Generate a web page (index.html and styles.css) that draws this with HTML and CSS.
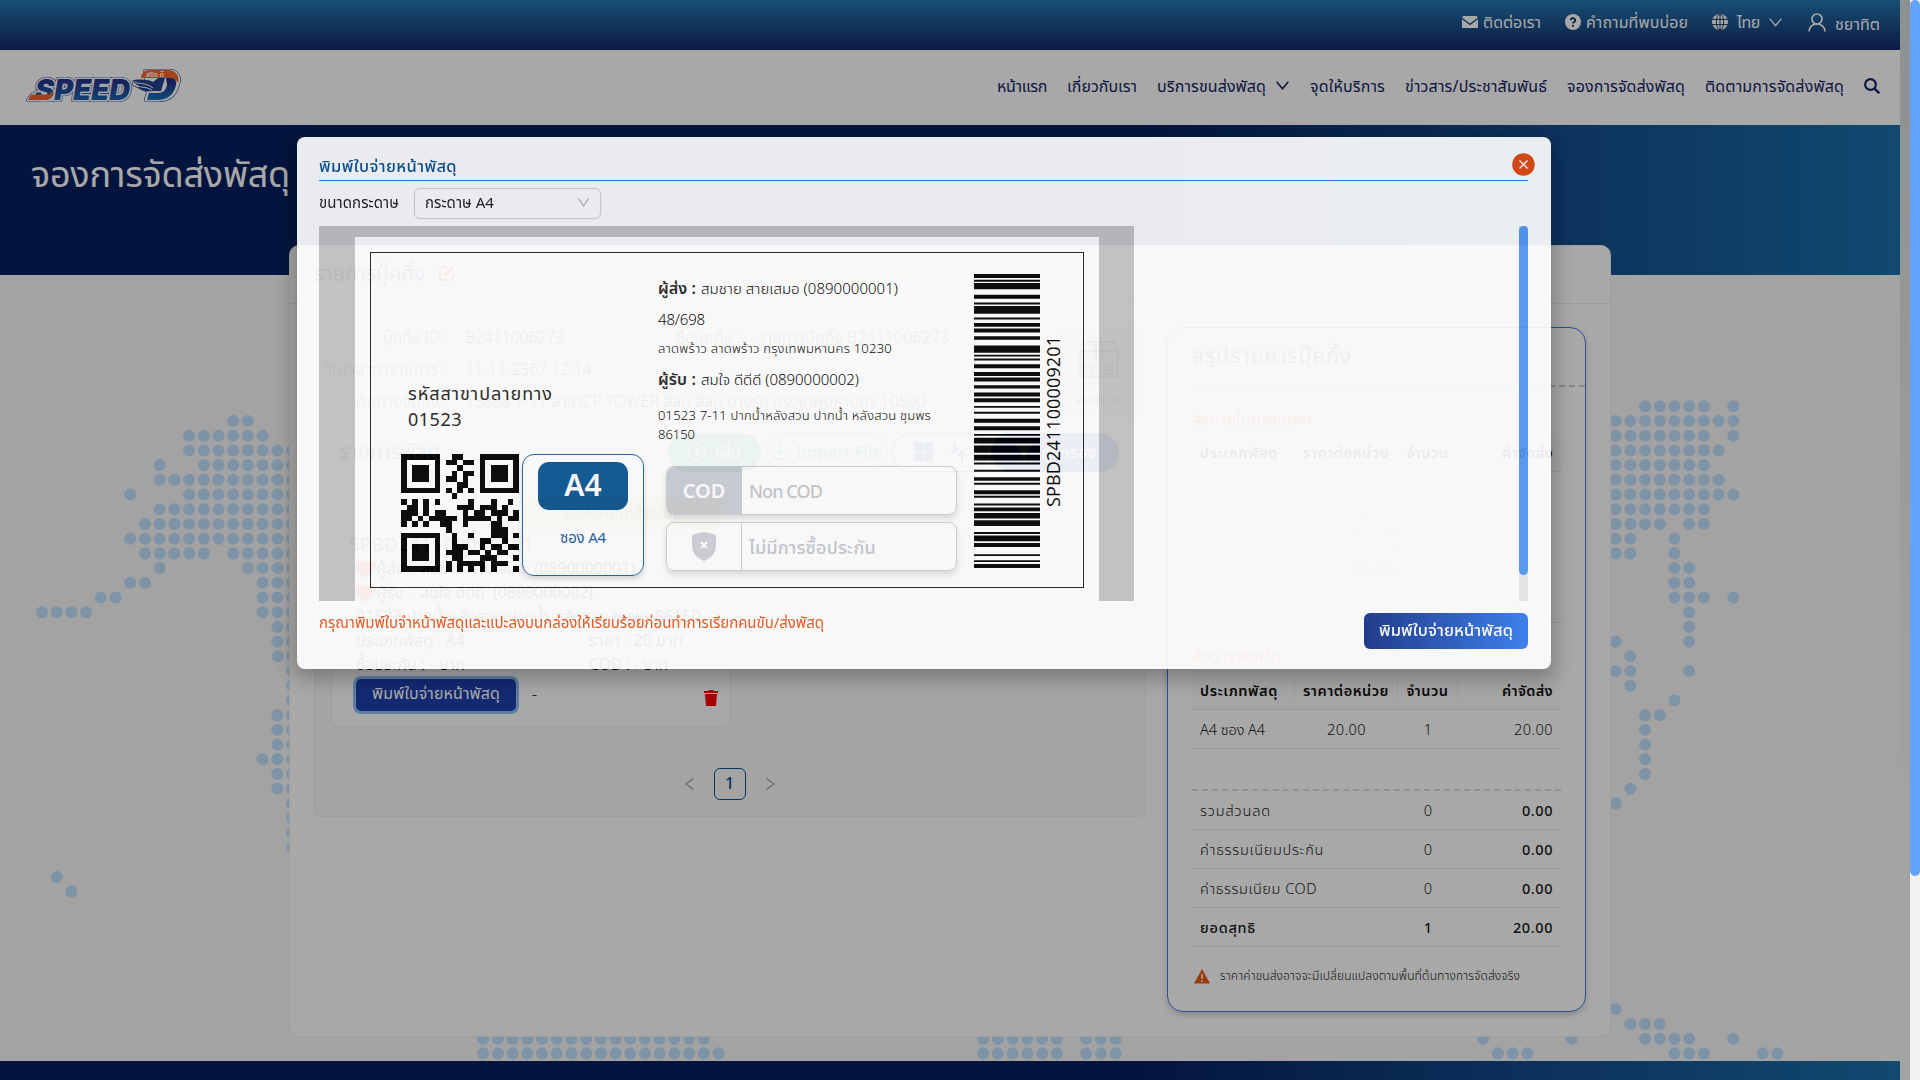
FILE: index.html
```html
<!DOCTYPE html>
<html lang="th">
<head>
<meta charset="utf-8">
<title>Speed-D</title>
<link rel="stylesheet" href="styles.css">
</head>
<body>
<div class="viewport">
<div class="page">
  <div class="topbar">
    <a class="tb contact"><svg width="16" height="12" viewBox="0 0 16 12"><path d="M1.5 0h13L16 1.500 8 7.500 0 1.500zM0 3.200l8 6 8-6V12H0z" fill="currentColor"/></svg><span data-w="58">ติดต่อเรา</span></a>
    <a class="tb faq"><svg width="16" height="16" viewBox="0 0 16 16"><circle cx="8" cy="8" r="8" fill="currentColor"/><path d="M5.800 6.300a2.200 2 0 1 1 3.200 1.700c-.8.400-1 .7-1 1.500" fill="none" stroke="#15345f" stroke-width="1.800"/><circle cx="8" cy="11.800" r="1.100" fill="#15345f"/></svg><span data-w="102">คำถามที่พบบ่อย</span></a>
    <a class="tb lang"><svg width="16" height="16" viewBox="0 0 16 16"><circle cx="8" cy="8" r="8" fill="currentColor"/><path d="M0 5.400h16M0 10.600h16M8 0v16" stroke="#15345f"/><ellipse cx="8" cy="8" rx="3.700" ry="8" fill="none" stroke="#15345f"/></svg><span data-w="23">ไทย</span><svg width="13" height="9" viewBox="0 0 13 9"><path d="M.7.7l5.800 7 5.800-7" fill="none" stroke="currentColor" stroke-width="1.300"/></svg></a>
    <a class="tb user"><svg width="18" height="19" viewBox="0 0 18 19"><circle cx="9" cy="6" r="5" fill="none" stroke="currentColor" stroke-width="1.700"/><path d="M1 18.500c0-4.500 3.500-7.500 8-7.500s8 3 8 7.500" fill="none" stroke="currentColor" stroke-width="1.700"/></svg><span data-w="45">ชยาทิต</span></a>
  </div>
  <div class="navbar">
    <svg class="logo" width="164" height="42" viewBox="0 0 164 42">
      <defs><linearGradient id="lg" x1="0" y1="0" x2="0" y2="1"><stop offset=".15" stop-color="#2a2a86"/><stop offset="1" stop-color="#1576b8"/></linearGradient></defs>
      <g stroke="#3a4a9a" stroke-width="4.200" stroke-linejoin="round" fill="#3a4a9a"><text class="logotxt" x="13" y="35" textLength="95" lengthAdjust="spacingAndGlyphs">SPEED</text><path d="M6 35h24l4-6H11zM123 6h24c9 0 12 7 8 16-3 9-10 13-19 13h-12l3-9-15-7 13-1z"/></g>
      <g stroke="#fff" stroke-width="3" stroke-linejoin="round" fill="#fff"><text class="logotxt" x="13" y="35" textLength="95" lengthAdjust="spacingAndGlyphs">SPEED</text><path d="M6 35h24l4-6H11zM123 6h24c9 0 12 7 8 16-3 9-10 13-19 13h-12l3-9-15-7 13-1z"/></g>
      <text class="logotxt" x="13" y="35" textLength="95" lengthAdjust="spacingAndGlyphs" fill="url(#lg)">SPEED</text>
      <path d="M9 29.500h18l3-4 1 3q-1 6.500-7 6.500H6z" fill="#f2662b"/>
      <path d="M119 13q1-8 8-8h18c9 0 13 6 11 13-2-4-6-5-12-5z" fill="#f2662b"/>
      <path d="M144 13h4c5 0 7 3 6 7-2 10-9 15-18 15h-11l2-7h9c5 0 8-3 9-8z" fill="url(#lg)"/>
      <path d="M109 16c6-2 16-2 22 1l5-4h7l-4 13h-8c-7 1-13-1-15-4h4c-4-1-7-3-8-5h4z" fill="#27408f"/>
      <path d="M113 18q12 0 18 5M119 22q6 0 11 3" stroke="#fff" fill="none"/>
      <text x="124" y="11.500" font-size="6.500" font-weight="700" fill="#fff">สปีด ดี</text>
    </svg>
    <nav>
      <a data-w="50">หน้าแรก</a><a data-w="70">เกี่ยวกับเรา</a><a class="drop"><span data-w="109">บริการขนส่งพัสดุ</span><svg width="13" height="9" viewBox="0 0 13 9"><path d="M.7.7l5.800 7 5.800-7" fill="none" stroke="currentColor" stroke-width="1.500"/></svg></a><a data-w="75">จุดให้บริการ</a><a data-w="142">ข่าวสาร/ประชาสัมพันธ์</a><a data-w="118">จองการจัดส่งพัสดุ</a><a data-w="139">ติดตามการจัดส่งพัสดุ</a>
      <svg width="16" height="16" viewBox="0 0 16 16"><circle cx="6.500" cy="6.500" r="5.400" fill="none" stroke="currentColor" stroke-width="2.100"/><path d="M10.500 10.500l4.800 4.800" stroke="currentColor" stroke-width="2.400"/></svg>
    </nav>
  </div>
  <div class="banner"><h1 data-w="259">จองการจัดส่งพัสดุ</h1></div>
  <main>
    <svg class="map" width="1900" height="786" viewBox="0 0 1900 786"><path transform="translate(42 146) scale(14.707)" fill="none" stroke="#c0dffb" stroke-width=".82" stroke-linecap="round" stroke-dasharray="0 1" d="M13 0h1.100M10 1h5.100M10 2h7.100M8 3h.1M11 3h6.100M8 4h9.100M6 5h.1M10 5h7.100M8 6h9.100M7 7h10.100M6 8h11.100M7 9h4.100M13 9h4.100M8 10h.1M14 10h3.100M6 11h1.100M15 11h2.100M4 12h1.100M15 12h2.100M0 13h3.100M15 13h2.100M16 14h1.100M16 15h1.100M16 16h1.100M17 17h.1M17 18h.1M17 19h.1M16 20h1.100M16 21h1.100M16 22h1.100M15 23h2.100M16 24h1.100M16 25h1.100M17 26h.1M17 27h.1M17 28h.1M17 29h.1M1 31h.1M2 32h.1M109 -1h4.100M115 -1h.1M107 0h8.100M107 1h6.100M115 1h.1M107 2h7.100M107 3h6.100M107 4h7.100M107 5h8.100M107 6h6.100M107 7h3.100M112 7h1.100M107 8h1.100M111 8h.1M107 9h1.100M111 9h.1M111 10h1.100M111 11h1.100M111 12h2.100M115 12h.1M112 13h.1M112 14h.1M107 15h.1M112 15h.1M108 16h.1M107 17h1.100M112 17h.1M108 18h.1M111 19h.1M109 20h1.100M109 21h.1M109 22h.1M109 23h.1M109 24h.1M108 25h.1M107 26h.1M107 40h.1M108 41h2.100M109 42h3.100M115 42h.1M111 43h2.100M117 43h1.100M30 42h15.100M30 43h16.100M64 42h5.100M64 43h5.100M71 42h2.100M71 43h2.100M98 42h.1M104 42h.1M99 43h2.100"/></svg>
    <section class="card">
      <header><h2 data-w="111">รายการบุ๊คกิ้ง</h2><i class="edit"><svg width="16" height="16" viewBox="0 0 16 16"><path d="M8 2H3a2 2 0 0 0-2 2v9a2 2 0 0 0 2 2h9a2 2 0 0 0 2-2V9" fill="none" stroke="#ff4500" stroke-width="2"/><path d="M5 8.500L12.500 1l2.500 2.500L7.500 11 5 11.300z" fill="#ff4500"/></svg></i></header>
      <div class="cols">
        <div class="left">
          <div class="info">
            <div class="fields">
              <div><label data-w="65">บุ๊คกิ้ง ID :</label><span class="v1" data-w="99">B2411006273</span><label class="l2" data-w="65">ชื่อบุ๊คกิ้ง :</label><span data-w="191">รายการบึกกิ๊ง B2411006273</span></div>
              <div><label data-w="124">วันเวลาทำรายการ :</label><span data-w="126">11-11-2567 12:14</span></div>
              <div><label data-w="92">ต้นทางจัดส่ง :</label><span data-w="461">15888 7-11 สาขาCP TOWER สีลม สีลม บางรัก กรุงเทพมหานคร 10500</span></div>
            </div>
            <div class="kind"><svg width="40" height="37" viewBox="0 0 40 37"><path d="M4 1h32l3 9v26H1V10zM1 10h38M17 1v16h6V1M5 25h9v7H5zM23 25h4M29 25h6M25 29h10M27 33h8" fill="#e8cdb8" stroke="#6b4a33" stroke-width="1.500"/></svg><b data-w="46">พัสดุทั่วไป</b></div>
          </div>
          <div class="panel">
            <div class="tools">
              <h2 data-w="101">รายการพัสดุ</h2>
              <span class="add"><svg width="18" height="18" viewBox="0 0 18 18"><path d="M9 5v8M5 9h8M1 9a8 8 0 1 0 16 0A8 8 0 1 0 1 9" fill="none" stroke="#fff" stroke-width="1.500"/></svg>เพิ่ม</span>
              <span class="imp"><svg width="16" height="16" viewBox="0 0 16 16"><path d="M8 0v10M4 7l4 4 4-4M1 9v6h14V9" fill="none" stroke="#22b573" stroke-width="1.300"/></svg>Import File</span>
              <span class="tog"><svg width="60" height="22" viewBox="0 0 60 22"><path d="M5 1h9v9H5zM15 1h9v9h-9zM5 11h9v9H5zM15 11h9v9h-9z" fill="#1d5fa8"/><path d="M46 1v9M42 7l4 4 4-4M53 21v-9M49 15l4-4 4 4" fill="none" stroke="#1d5fa8" stroke-width="2"/></svg></span>
              <span class="filt"><svg width="20" height="18" viewBox="0 0 20 18"><path d="M1 1h18l-7 8v8l-4-2V9z" fill="#fff"/></svg>ตัวกรอง</span>
            </div>
            <article class="parcel">
              <div class="ribbon"><span data-w="120">รอส่งพัสดุเข้าระบบ</span></div>
              <h3 data-w="185">SPBD241100009201</h3>
              <p><svg width="20" height="17" viewBox="0 0 20 17"><path d="M10 17C3 12 0 9 0 5a5 5 0 0 1 10-2 5 5 0 0 1 10 2c0 4-3 7-10 12z" fill="#ff2a3c"/></svg><span data-w="259">ผู้ส่ง :&nbsp; สมชาย สายเสมอ &nbsp;(0890000001)</span></p>
              <p><svg width="20" height="17" viewBox="0 0 20 17"><path d="M10 17C3 12 0 9 0 5a5 5 0 0 1 10-2 5 5 0 0 1 10 2c0 4-3 7-10 12z" fill="#ff2a3c"/></svg><span data-w="217">ผู้รับ :&nbsp; สมใจ ดีดีดี &nbsp;(0890000002)</span></p>
              <p><span data-w="345">01523 ปากน้ำหลังสวน ปากน้ำ หลังสวน ชุมพร 86150</span></p>
              <p class="pair"><span data-w="109">ประเภทพัสดุ : A4</span><span data-w="94">ราคา : 20 บาท</span></p>
              <p class="pair"><span data-w="109">ซื้อประกัน : - บาท</span><span data-w="79">COD : - บาท</span></p>
              <div class="acts"><span class="print"><span data-w="128">พิมพ์ใบจ่ายหน้าพัสดุ</span></span><span class="dash">-</span><svg width="14" height="16" viewBox="0 0 14 16"><path d="M0 1h4l1-1h4l1 1h4v2H0zM1 4h12l-1 12H2z" fill="#f00"/></svg></div>
            </article>
            <div class="pager"><svg width="9" height="12" viewBox="0 0 9 12"><path d="M8.500.5L1 6l7.500 5.500" fill="none" stroke="#a0a0a0" stroke-width="1.300"/></svg><b>1</b><svg width="9" height="12" viewBox="0 0 9 12"><path d="M.5.5L8 6 .5 11.500" fill="none" stroke="#a0a0a0" stroke-width="1.300"/></svg></div>
          </div>
        </div>
        <aside class="sum">
          <h2 data-w="145">สรุปรายการบุ๊คกิ้ง</h2>
          <div class="zone z1"><span data-w="120">ส่งภายในกรุงเทพฯ</span></div>
          <div class="row head"><span><b data-w="78">ประเภทพัสดุ</b></span><span><b data-w="86">ราคาต่อหน่วย</b></span><span><b data-w="42">จำนวน</b></span><span><b data-w="51">ค่าจัดส่ง</b></span></div>
          <div class="nodata"><svg width="46" height="36" viewBox="0 0 46 36"><path d="M1 18L9 1h28l8 17v17H1zM1 18h12q2 6 6 6h8q4 0 6-6h12" fill="#fafafa" stroke="#ddd"/></svg><span data-w="49">No data</span></div>
          <div class="zone z2"><span data-w="90">ส่งต่างจังหวัด</span></div>
          <div class="row head"><span><b data-w="78">ประเภทพัสดุ</b></span><span><b data-w="86">ราคาต่อหน่วย</b></span><span><b data-w="42">จำนวน</b></span><span><b data-w="51">ค่าจัดส่ง</b></span></div>
          <div class="row"><span><i data-w="65">A4 ซอง A4</i></span><span><i data-w="39">20.00</i></span><span>1</span><span><i data-w="39">20.00</i></span></div>
          <div class="gap"></div>
          <div class="row"><span><i data-w="71">รวมส่วนลด</i></span><span></span><span>0</span><span class="m"><i data-w="31">0.00</i></span></div>
          <div class="row"><span><i data-w="124">ค่าธรรมเนียมประกัน</i></span><span></span><span>0</span><span class="m"><i data-w="31">0.00</i></span></div>
          <div class="row"><span><i data-w="117">ค่าธรรมเนียม COD</i></span><span></span><span>0</span><span class="m"><i data-w="31">0.00</i></span></div>
          <div class="row m"><span><i data-w="56">ยอดสุทธิ</i></span><span></span><span>1</span><span><i data-w="40">20.00</i></span></div>
          <div class="warn"><svg width="16" height="15" viewBox="0 0 16 15"><path d="M8 0l8 14.500H0z" fill="#ea5a12"/><path d="M8 5v5M8 11.300v1.600" stroke="#fff" stroke-width="1.500"/></svg><span data-w="300">ราคาค่าขนส่งอาจจะมีเปลี่ยนแปลงตามพื้นที่ต้นทางการจัดส่งจริง</span></div>
        </aside>
      </div>
    </section>
  </main>
  <footer></footer>
</div>
<div class="strip"></div>
<div class="track"><div class="thumb"></div></div>
<div class="mask"></div>
<div class="modal">
  <svg class="close" width="23" height="23" viewBox="0 0 23 23"><circle cx="11.500" cy="11.500" r="11.300" fill="#e34b12"/><path d="M7.500 7.500l8 8M15.500 7.500l-8 8" stroke="#fff" stroke-width="1.300"/></svg>
  <div class="mtitle"><b data-w="138">พิมพ์ใบจ่ายหน้าพัสดุ</b></div>
  <div class="size"><span data-w="80">ขนาดกระดาษ</span><div class="select"><span data-w="69">กระดาษ A4</span><svg width="11" height="9" viewBox="0 0 11 9"><path d="M.5.5l5 7.500 5-7.500" fill="none" stroke="#b0b0b0" stroke-width="1.200"/></svg></div></div>
  <div class="scroll">
    <div class="desk"><div class="sheet"><div class="label">
      <div class="c1">
        <div class="code"><span data-w="145">รหัสสาขาปลายทาง</span></div>
        <div class="code"><span data-w="54">01523</span></div>
        <div class="marks">
          <svg width="118" height="118" viewBox="0 0 21 21" shape-rendering="crispEdges"><path fill="none" stroke="#000" d="M0 .5h7M9 .5h2M14 .5h7M0 1.500h1M6 1.500h1M8 1.500h2M11 1.500h2M14 1.500h1M20 1.500h1M0 2.500h1M2 2.500h3M6 2.500h1M10 2.500h1M14 2.500h1M16 2.500h3M20 2.500h1M0 3.500h1M2 3.500h3M6 3.500h1M9 3.500h1M11 3.500h2M14 3.500h1M16 3.500h3M20 3.500h1M0 4.500h1M2 4.500h3M6 4.500h1M8 4.500h2M11 4.500h1M14 4.500h1M16 4.500h3M20 4.500h1M0 5.500h1M6 5.500h1M10 5.500h2M14 5.500h1M20 5.500h1M0 6.500h7M8 6.500h1M10 6.500h1M12 6.500h1M14 6.500h7M9 7.500h1M0 8.500h1M2 8.500h1M4 8.500h1M6 8.500h1M12 8.500h1M16 8.500h1M19 8.500h1M1 9.500h2M4 9.500h1M10 9.500h3M14 9.500h1M15 9.500h2M18 9.500h1M0 10.500h2M2 10.500h1M4 10.500h1M6 10.500h2M11 10.500h1M13 10.500h2M16 10.500h3M20 10.500h1M0 11.500h2M3 11.500h1M5 11.500h5M11 11.500h5M17 11.500h1M19 11.500h2M0 12.500h1M2 12.500h1M4 12.500h1M7 12.500h2M11 12.500h1M16 12.500h2M8 13.500h1M16 13.500h3M9 14.500h1M12 14.500h1M16 14.500h1M17 14.500h2M20 14.500h1M9 15.500h1M14 15.500h2M18 15.500h1M0 14.500h7M0 15.500h1M6 15.500h1M0 16.500h1M2 16.500h3M6 16.500h1M9 16.500h3M14 16.500h1M16 16.500h2M19 16.500h2M0 17.500h1M2 17.500h3M6 17.500h1M8 17.500h3M12 17.500h2M15 17.500h1M17 17.500h2M0 18.500h1M2 18.500h3M6 18.500h1M9 18.500h2M14 18.500h3M20 18.500h1M0 19.500h1M6 19.500h1M8 19.500h1M10 19.500h5M16 19.500h3M0 20.500h7M8 20.500h1M10 20.500h1M12 20.500h1M14 20.500h1M16 20.500h1M20 20.500h1"/></svg>
          <div class="a4"><b>A4</b><span data-w="46">ซอง A4</span></div>
        </div>
      </div>
      <div class="c2">
        <p class="who"><b data-w="38">ผู้ส่ง :</b><span data-w="197">สมชาย สายเสมอ (0890000001)</span></p>
        <p class="no"><span data-w="47">48/698</span></p>
        <p class="addr"><span data-w="234">ลาดพร้าว ลาดพร้าว กรุงเทพมหานคร 10230</span></p>
        <p class="who"><b data-w="38">ผู้รับ :</b><span data-w="158">สมใจ ดีดีดี (0890000002)</span></p>
        <p class="addr a2"><span data-w="273">01523 7-11 ปากน้ำหลังสวน ปากน้ำ หลังสวน ชุมพร</span></p>
        <p class="addr a3"><span data-w="37">86150</span></p>
        <div class="opt"><b class="on">COD</b><span data-w="73">Non COD</span></div>
        <div class="opt"><b><svg width="26" height="29" viewBox="0 0 26 29"><path d="M13 0q6 1 12 3v10c0 8-5 13-12 16C6 26 1 21 1 13V3q6-2 12-3z" fill="#cdd0d6"/><path d="M10 10l6 6M16 10l-6 6" stroke="#fff" stroke-width="2"/></svg></b><span data-w="127">ไม่มีการซื้อประกัน</span></div>
      </div>
      <div class="c3">
        <svg width="66" height="294" viewBox="0 161 10 880" preserveAspectRatio="none"><path fill="#000" d="M0 161h10v12H0zM0 178h10v6H0zM0 188h10v19H0zM0 223h10v12H0zM0 246h10v6H0zM0 257h10v23H0zM0 291h10v6H0zM0 308h10v11H0zM0 324h10v12H0zM0 347h10v11H0zM0 375h10v22H0zM0 403h10v5H0zM0 414h10v6H0zM0 431h10v12H0zM0 454h10v12H0zM0 471h10v12H0zM0 494h10v10H0zM0 516h10v12H0zM0 533h10v12H0zM0 556h10v5H0zM0 573h10v6H0zM0 594h10v12H0zM0 617h10v12H0zM0 640h10v5H0zM0 651h10v17H0zM0 674h10v22H0zM0 702h10v17H0zM0 725h10v6H0zM0 747h10v6H0zM0 769h10v11H0zM0 786h10v6H0zM0 808h10v12H0zM0 825h10v6H0zM0 848h10v6H0zM0 860h10v11H0zM0 876h10v17H0zM0 898h10v17H0zM0 933h10v6H0zM0 944h10v17H0zM0 966h10v12H0zM0 1000h10v5H0zM0 1018h10v5H0zM0 1029h10v12H0z"/></svg>
        <svg class="num" width="20" height="294" viewBox="0 0 20 294"><text transform="translate(15 233) rotate(-90)" textLength="171">SPBD241100009201</text></svg>
      </div>
    </div></div></div>
    <div class="strack"><div class="sthumb"></div></div>
  </div>
  <div class="foot"><span class="note" data-w="505">กรุณาพิมพ์ใบจำหน้าพัสดุและแปะลงบนกล่องให้เรียบร้อยก่อนทำการเรียกคนขับ/ส่งพัสดุ</span><span class="go"><span data-w="134">พิมพ์ใบจ่ายหน้าพัสดุ</span></span></div>
</div>
</div>
<script src="fit.js"></script>
</body>
</html>
```

FILE: fit.js
```js
document.querySelectorAll('[data-w]').forEach(function (el) {
  var want = parseFloat(el.dataset.w);
  el.style.letterSpacing = '0px';
  var natural = el.getBoundingClientRect().width;
  el.style.letterSpacing = '1px';
  var count = el.getBoundingClientRect().width - natural;
  el.style.letterSpacing = ((want - natural) / count).toFixed(3) + 'px';
});
```

FILE: styles.css
```css
* { box-sizing: border-box; }
body { margin: 0; font: 300 16px/24px "Noto Sans", "Noto Sans Thai", sans-serif; color: #1a1a1a; }
h1, h2, h3, p { margin: 0; font-weight: 400; }
i { font-style: normal; }
svg { display: block; flex: none; }
[data-w] { display: inline-block; white-space: nowrap; flex: none; }
.viewport { position: relative; width: 1920px; height: 1080px; overflow: hidden; display: flex; }
.page { width: 1900px; flex: none; display: flex; flex-direction: column; }
.topbar { height: 50px; background: linear-gradient(#2478ae, #14296a); display: flex; justify-content: flex-end; padding: 0 20px 6px 0; color: #fff; font-size: 16px; font-weight: 400; }
.tb { display: flex; align-items: center; }
.contact { gap: 5px; margin-right: 24px; }
.faq { gap: 5px; margin-right: 24px; }
.lang { gap: 9px; margin-right: 26px; }
.user { gap: 9px; }
.user span { padding-top: 3px; }
.navbar { height: 75px; background: #fff; display: flex; justify-content: space-between; align-items: center; padding: 0 20px 3px 22px; }
.logo { margin-top: 0; }
.logotxt { font: italic 900 29px Inter, "Liberation Sans", sans-serif; }
nav { display: flex; align-items: center; gap: 20px; color: #131f63; font-size: 16px; font-weight: 400; }
nav .drop { display: flex; align-items: center; gap: 10px; margin-right: 1px; }
nav a { margin-top: -1px; }
.banner { height: 150px; background: linear-gradient(90deg, #06205f 60%, #0d3a78 72%, #144d8e 82%, #1a70aa); color: #fff; padding: 25px 0 0 31px; }
.banner h1 { font-size: 36px; line-height: 48px; }
main { position: relative; height: 786px; background: #f7f7f7; padding-left: 289px; }
.map { position: absolute; left: 0; top: 0; }
.card { position: relative; width: 1322px; height: 792px; margin-top: -30px; background: #fff; border: 1px solid #f0f0f0; border-radius: 10px; }
.card header { height: 58px; border-bottom: 1px solid #eee; padding: 0 0 3px 24px; display: flex; align-items: center; gap: 10px; }
.card h2 { font-size: 21px; color: #1a62a8; }
.edit { width: 24px; height: 24px; border: 1px solid #fbe0d2; display: flex; align-items: center; justify-content: center; }
.cols { display: flex; align-items: flex-start; gap: 21px; padding-left: 24px; }
.left { width: 832px; }
.info { height: 117px; display: flex; justify-content: space-between; padding: 17px 3px 0 0; }
.fields { width: 635px; }
.fields > div { height: 32px; display: grid; grid-template-columns: 134px 211px 82px 1fr; justify-items: start; align-items: center; }
.fields > div > label:first-child { justify-self: end; }
.fields > div > span { margin-left: 17px; }
.fields .l2 { margin-left: 17px; }
.kind { width: 88px; height: 90px; margin-top: 5px; background: #fff4e8; border-radius: 6px; display: flex; flex-direction: column; align-items: center; padding-top: 15px; gap: 10px; font-size: 11px; color: #444; }
.panel { height: 396px; background: #f9f9f9; border: 1px solid #f0f0f0; border-radius: 8px; padding: 10px 16px 0; }
.tools { display: flex; height: 40px; align-items: center; padding-left: 8px; }
.tools h2 { margin: -3px 228px 0 0; }
.tools > span { height: 39px; border-radius: 20px; display: flex; align-items: center; justify-content: center; gap: 8px; font-weight: 600; font-size: 16px; flex: none; }
.add { width: 93px; background: #22b573; color: #fff; }
.imp { width: 122px; border: 1px solid #22b573; color: #22b573; margin-left: 5px; }
.tog { width: 94px; border: 1px solid #1d5fa8; margin-left: 4px; }
.filt { width: 128px; background: #1e50c8; color: #fff; margin-left: 5px; }
.parcel { width: 400px; height: 244px; margin-top: 11px; background: #fff; border: 1px solid #f0f0f0; border-radius: 8px; padding: 14px 8px 0 24px; }
.ribbon { width: 199px; height: 32px; margin-left: auto; background: #ffd890; border-radius: 4px; text-align: center; line-height: 28px; color: #333; }
.parcel h3 { font-size: 18px; line-height: 28px; height: 27px; color: #1a62a8; margin-left: -7px; }
.parcel p { height: 24px; display: flex; align-items: center; font-size: 16px; }
.parcel p span { margin-top: -2px; }
.parcel .pair > :first-child { margin-right: 124px; }
.acts { display: flex; align-items: center; height: 36px; }
.print { width: 160px; height: 32px; border-radius: 5px; background: #1e3fad; box-shadow: 0 0 0 3px #8fc0f5; color: #fff; text-align: center; line-height: 28px; font-size: 16px; font-weight: 400; }
.dash { margin: -3px auto 0 16px; }
.acts svg { margin: 6px 4px 0 0; }
.pager { width: 829px; height: 32px; margin: 41px 0 0 -16px; display: flex; justify-content: center; align-items: center; gap: 20px; }
.pager b { width: 32px; height: 32px; border: 1.500px solid #0b5394; border-radius: 6px; text-align: center; line-height: 28px; font-weight: 500; color: #0b4a86; }
.sum { width: 419px; height: 685px; margin-top: 23px; border: 1.500px solid #3f7fe0; border-radius: 16px; padding: 0 24px; box-shadow: 0 3px 6px rgba(0,0,0,.18); font-size: 14.500px; }
.sum h2 { display: block; height: 57px; line-height: 54px; }
.zone { color: #ff5a1f; font-size: 16px; font-weight: 400; display: flex; align-items: center; }
.z1 { border-top: 2px dashed #ccc; margin-right: -24px; height: 48px; padding-top: 17px; }
.z2 { height: 24px; margin: 21px 0 3px; }
.row { display: grid; grid-template-columns: 103px 103px 60px 1fr; height: 39px; align-items: center; border-bottom: 1px solid #eaeaea; width: 369px; }
.row > span { padding: 0 8px; text-align: center; white-space: nowrap; line-height: 22px; }
.row > span:first-child { text-align: left; }
.row > span:last-child { text-align: right; }
.row.head { background: #fafafa; border-radius: 8px 8px 0 0; font-weight: 600; color: #111; }
.row.head b { font-weight: 600; }
.row.head > span:not(:last-child) { border-right: 1px solid #eee; }
.m { font-weight: 500; }
.nodata { height: 151px; border-bottom: 1px solid #eaeaea; display: flex; flex-direction: column; align-items: center; padding-top: 41px; gap: 8px; color: #bbb; width: 369px; }
.gap { height: 42px; border-bottom: 2px dashed #ddd; width: 369px; }
.warn { display: flex; align-items: center; gap: 10px; padding: 18px 0 0 2px; font-size: 12px; }
.warn span { margin-top: -1px; }
footer { height: 19px; background: linear-gradient(90deg, #06205f 60%, #0d3a78 72%, #144d8e 82%, #1a70aa); }
.strip { width: 10px; background: linear-gradient(#d7dcdc, #f7f7f7 75%, #f7f9f9); }
.track { width: 10px; background: #f1f1f1; position: relative; z-index: 2; }
.thumb { height: 876px; border-radius: 5px; background: #62a4fa; }
.mask { position: absolute; left: 0; top: 0; width: 1910px; height: 1080px; background: rgba(0,0,0,.34); }
.modal { position: absolute; left: 296.500px; top: 137px; width: 1254px; height: 531.500px; background: #fff; border-radius: 8px; opacity: .92; padding: 12px 22.500px 0 22.500px; box-shadow: 0 6px 20px 4px rgba(0,0,0,.28); font-weight: 400; font-size: 15px; color: #222; }
.close { position: absolute; right: 16px; top: 15.500px; }
.mtitle { height: 32px; border-bottom: 1.500px solid #2f7be8; color: #0c5596; font-size: 16.500px; line-height: 34px; }
.mtitle b { font-weight: 500; }
.size { display: flex; align-items: center; gap: 15px; margin-top: 6px; height: 32px; }
.size > span { margin-top: -2px; }
.select { width: 187px; height: 31px; border: 1px solid #d4d4d8; border-radius: 6px; display: flex; align-items: center; justify-content: space-between; padding: 0 11px 2px 10px; box-shadow: 0 0 0 1px rgba(0,0,0,.02); }
.scroll { margin-top: 7px; display: flex; justify-content: space-between; height: 375px; }
.desk { width: 815px; background: #c5c5c5; padding: 11px 35px 0 36px; }
.sheet { background: #fff; height: 364px; padding: 15px 0 0 15px; }
.label { width: 714px; height: 336px; border: 1.500px solid #222; display: flex; }
.c1 { width: 287px; padding: 127px 0 0 30px; flex: none; }
.code { font-size: 18px; height: 26px; line-height: 26px; padding-left: 7px; }
.marks { display: flex; gap: 3px; margin-top: 22px; }
.a4 { width: 122px; height: 122px; border: 1.500px solid #1a62a8; border-radius: 12px; display: flex; flex-direction: column; align-items: center; padding-top: 7px; color: #1a5c9c; gap: 15px; box-shadow: 0 3px 5px rgba(0,0,0,.15); }
.a4 b { width: 90px; height: 48px; border-radius: 11px; background: #095391; color: #fff; text-align: center; font-size: 30px; font-weight: 600; line-height: 46px; }
.c2 { width: 316px; padding-top: 21px; flex: none; }
.c2 p span { font-weight: 300; color: #000; }
.c2 .who { height: 28px; line-height: 28px; display: flex; gap: 5px; }
.who b { font-size: 16px; font-weight: 600; }
.no { height: 35px; line-height: 35px; }
.addr { font-size: 13px; height: 23px; line-height: 23px; }
.addr + .who { margin-top: 5px; }
.c2 .a2 { margin-top: 11px; height: 20px; line-height: 22px; }
.a3 { height: 18px; line-height: 21px; }
.opt { width: 291px; height: 49px; margin: 24px 0 0 8px; border: 1.500px solid #cdd0d6; border-radius: 8px; display: flex; align-items: center; color: #c3c7ce; font-size: 18px; font-weight: 500; box-shadow: 0 4px 6px rgba(0,0,0,.13); overflow: hidden; flex: none; }
.opt + .opt { margin-top: 7px; }
.opt b { width: 75px; height: 100%; border-right: 1.500px solid #cdd0d6; display: flex; align-items: center; justify-content: center; margin-right: 7px; font-size: 20px; font-weight: 600; }
.opt .on { background: #c9ccd3; color: #fff; }
.c3 { display: flex; padding-top: 20.500px; gap: 5px; }
.num text { font-family: "Open Sans", sans-serif; font-size: 18px; fill: #000; font-weight: 400; }
.strack { width: 9px; background: #e9e9e9; }
.sthumb { height: 349px; border-radius: 5px; background: #5598f5; }
.foot { display: flex; justify-content: space-between; align-items: flex-start; margin-top: 12px; color: #e9571a; }
.note { line-height: 18px; }
.go { width: 164px; height: 36px; border-radius: 6px; background: linear-gradient(90deg, #16338a, #347cf0); color: #fff; text-align: center; line-height: 33px; font-size: 16.500px; font-weight: 500; }
```
